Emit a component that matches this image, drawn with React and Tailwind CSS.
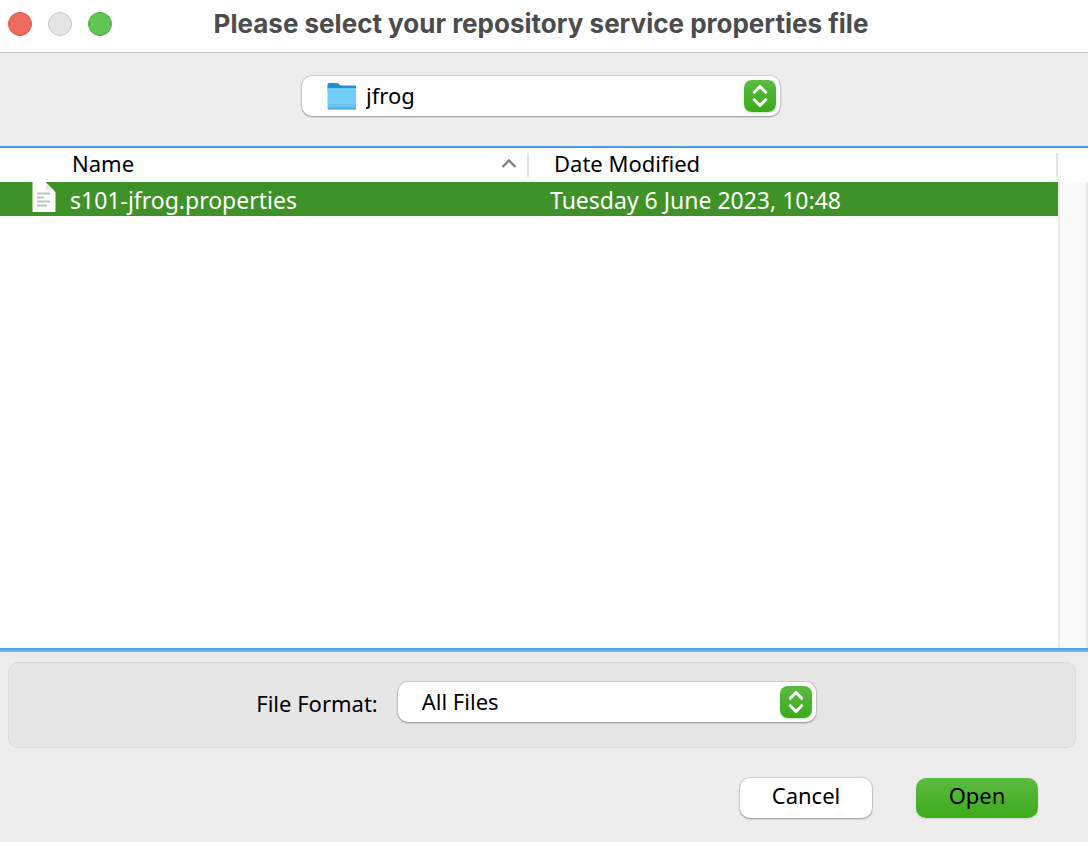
import { useState } from "react";

const files = [
  { name: "s101-jfrog.properties", modified: "Tuesday 6 June 2023, 10:48" },
];

const FolderIcon = () => (
  <svg className="h-[30px] w-[30px]" viewBox="0 0 30 30" fill="none">
    <defs>
      <linearGradient id="folderFront" x1="0" y1="0" x2="0" y2="1">
        <stop offset="0" stopColor="#6bcaf8" />
        <stop offset="0.7" stopColor="#7bd0fb" />
        <stop offset="1" stopColor="#62bdee" />
      </linearGradient>
    </defs>
    <rect x="1" y="26" width="28" height="2" rx="1" fill="#000" opacity="0.25" />
    <path
      d="M0.500 2.500a1.500 1.500 0 0 1 1.500-1.500h7.500c1.200 0 1.900.5 2.600 1.200s1.500 1.300 2.700 1.300H28a1 1 0 0 1 1 1V9H0.500z"
      fill="#2590d0"
    />
    <path d="M0.500 6.500h28.500V26a1 1 0 0 1-1 1H1.500a1 1 0 0 1-1-1z" fill="url(#folderFront)" />
    <path d="M0.500 7h28.500" stroke="#8bdcff" />
    <path d="M1 22.500h28M1 24.500h28" stroke="#5fb9e8" strokeWidth="0.6" />
    <path d="M1 26.300h28" stroke="#479fd0" strokeWidth="0.8" />
  </svg>
);

const DocumentIcon = () => (
  <svg className="h-[30px] w-6" viewBox="0 0 24 30" fill="none">
    <path d="M0.500 0h13L23.500 10v20H0.500z" fill="#fdfdfd" />
    <path d="M13.500 0c1.500 3 .8 5 .5 7.500 3.500-.3 7 .2 9.500 2.500z" fill="#e4e4e4" />
    <path
      d="M5 11.500h13M5 15.500h7M5 19.500h13M5 23.500h10"
      stroke="#c2c2c2"
      strokeWidth="1.800"
    />
  </svg>
);

const Stepper = () => (
  <span className="pointer-events-none absolute top-1 right-1 flex h-8 w-8 items-center justify-center rounded-lg bg-linear-to-b from-[#5bbb40] to-[#3aab17] shadow-[0_1px_2px_rgba(58,171,23,0.3)]">
    <svg className="h-8 w-8" viewBox="0 0 32 32" fill="none">
      <path
        d="M10.300 12.300L16 6.500l5.700 5.800M10.300 19.700L16 25.500l5.700-5.800"
        stroke="#fff"
        strokeWidth="3"
        strokeLinecap="round"
        strokeLinejoin="round"
      />
    </svg>
  </span>
);

const selectClass =
  "block h-10 w-full appearance-none rounded-[10px] bg-white text-black shadow-[0_0_1px_1px_rgba(0,0,0,0.1),0_1px_2px_rgba(0,0,0,0.3)] outline-none";

const App = () => {
  const [selected, setSelected] = useState(0);

  return (
    <div className="flex min-h-screen flex-col bg-[#ededed] font-['Noto_Sans',sans-serif] text-[22px] leading-7 text-black">
      {/* Title bar */}
      <header className="grid h-[53px] grid-cols-[1fr_auto_1fr] items-start border-b border-[#c4c4c4] bg-white pr-3.5 pl-2">
        <div className="mt-3 flex gap-4">
          <button
            aria-label="Close"
            className="h-6 w-6 rounded-full border border-[#d8564b] bg-[#ec6a5e]"
          />
          <button
            aria-label="Minimise"
            className="h-6 w-6 rounded-full border border-[#c8c8c8] bg-[#e5e5e5]"
          />
          <button
            aria-label="Zoom"
            className="h-6 w-6 rounded-full border border-[#51a73e] bg-[#61c554]"
          />
        </div>
        <h1 className="mt-2 font-['Inter',sans-serif] text-[26px] leading-8 font-bold text-[#4c4c4c]">
          Please select your repository service properties file
        </h1>
      </header>

      {/* Current folder */}
      <div className="flex justify-center pt-[23px] pr-1.5 pb-[30px]">
        <div className="relative w-[478px]">
          <select
            aria-label="Folder"
            className={`${selectClass} pr-10 pb-0.5 pl-16`}
          >
            <option>jfrog</option>
          </select>
          <span className="pointer-events-none absolute top-1.5 left-[25px]">
            <FolderIcon />
          </span>
          <Stepper />
        </div>
      </div>

      {/* File list */}
      <main className="flex flex-1 border-t-2 border-[#4a9de0] bg-white">
        <div className="flex-1">
          <table className="w-full table-fixed border-collapse">
            <thead>
              <tr className="h-[34px]">
                <th className="p-0 text-left font-normal">
                  <div className="flex h-6 items-center justify-between border-r-2 border-[#e4e4e4] pr-2.5 pb-1 pl-[72px]">
                    Name
                    <svg className="h-4 w-4" viewBox="0 0 16 16" fill="none">
                      <path
                        d="M1.500 12L8 5.500l6.500 6.500"
                        stroke="#808080"
                        strokeWidth="2.400"
                      />
                    </svg>
                  </div>
                </th>
                <th className="p-0 text-left font-normal">
                  <div className="flex h-6 items-center border-r-2 border-[#e4e4e4] pb-1 pl-[25px]">
                    Date Modified
                  </div>
                </th>
              </tr>
            </thead>
            <tbody className="text-[23px]">
              {files.map((file, i) => (
                <tr
                  key={file.name}
                  onClick={() => setSelected(i)}
                  className={
                    i === selected ? "h-[34px] bg-[#3f9227] text-white" : "h-[34px]"
                  }
                >
                  <td className="p-0">
                    <div className="flex h-[34px] items-start pl-8">
                      <DocumentIcon />
                      <span className="mt-1 ml-3.5">{file.name}</span>
                    </div>
                  </td>
                  <td className="p-0">
                    <div className="flex h-[34px] items-start pl-[21px]">
                      <span className="mt-1">{file.modified}</span>
                    </div>
                  </td>
                </tr>
              ))}
            </tbody>
          </table>
        </div>
        <div className="mt-[34px] w-[30px] border-x-2 border-[#e9e9e9] bg-[#fafafa]" />
      </main>

      {/* Format and actions */}
      <footer className="border-t-2 border-[#52a5ec]">
        <div className="border-t-2 border-[#66b8fb] pt-2.5 pr-3 pb-6 pl-2">
          <div className="flex h-[86px] items-center justify-center gap-5 rounded-[10px] border border-[#dadada] bg-[#e6e6e6] pr-3 pb-1.5">
            <label htmlFor="format" className="mt-0.5">
              File Format:
            </label>
            <div className="relative w-[418px]">
              <select id="format" className={`${selectClass} pr-10 pb-0.5 pl-6`}>
                <option>All Files</option>
              </select>
              <Stepper />
            </div>
          </div>
          <div className="mt-[30px] flex justify-end gap-11 pr-[38px]">
            <button className="h-10 w-[132px] rounded-[10px] bg-white pb-1.5 shadow-[0_0_1px_1px_rgba(0,0,0,0.1),0_1px_2px_rgba(0,0,0,0.3)]">
              Cancel
            </button>
            <button className="h-10 w-[122px] rounded-[10px] bg-linear-to-b from-[#5bbb40] to-[#3aab17] pb-1.5 shadow-[0_1px_2px_rgba(0,0,0,0.12)]">
              Open
            </button>
          </div>
        </div>
      </footer>
    </div>
  );
};

export default App;
